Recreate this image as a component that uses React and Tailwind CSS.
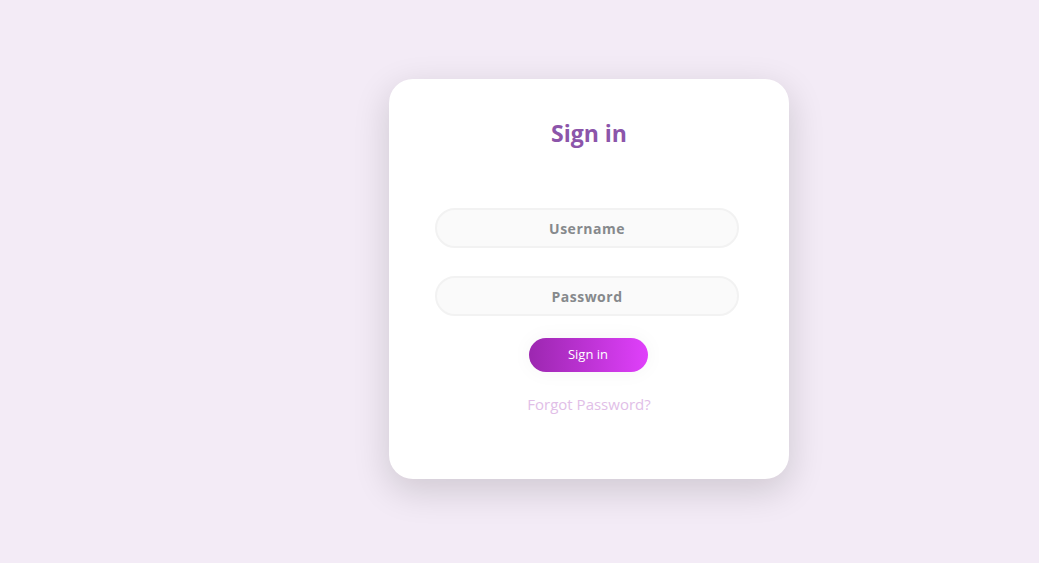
import React from "react";

export default function App() {
  return (
    <div
      className="min-h-screen w-full bg-[#f3ebf6] flex pt-[79px] pl-[389px]"
      style={{ fontFamily: '"Open Sans", "Noto Sans", sans-serif' }}
    >
      <div className="w-[400px] h-[400px] bg-white rounded-[1.5em] shadow-[0_11px_35px_2px_rgba(0,0,0,0.14)] flex flex-col items-center">
        <p className="mt-[39px] text-[23px] font-bold text-[#8c55aa] leading-[30px]">Sign in</p>
        <form className="mt-[60px] flex flex-col items-center w-full">
          <input
            type="text"
            placeholder="Username"
            className="mr-[4px] w-[304px] h-[40px] rounded-[20px] bg-[#fafafa] border-2 border-[#f2f2f2] text-center text-[14px] font-bold tracking-[0.5px] text-[#808080] placeholder:text-[#86898c] outline-none"
          />
          <input
            type="password"
            placeholder="Password"
            className="mr-[4px] mt-[28px] w-[304px] h-[40px] rounded-[20px] bg-[#fafafa] border-2 border-[#f2f2f2] text-center text-[14px] font-bold tracking-[0.5px] text-[#808080] placeholder:text-[#86898c] outline-none"
          />
          <button
            type="button"
            className="mr-[2px] mt-[22px] w-[119px] h-[34px] rounded-[5em] text-white text-[13px] bg-gradient-to-r from-[#9c27b0] to-[#e040fb] shadow-[0_0_20px_1px_rgba(0,0,0,0.04)]"
          >
            Sign in
          </button>
          <a href="#" className="mt-[22px] text-[15px] text-[#e1bee7] leading-[20px]">
            Forgot Password?
          </a>
        </form>
      </div>
    </div>
  );
}
